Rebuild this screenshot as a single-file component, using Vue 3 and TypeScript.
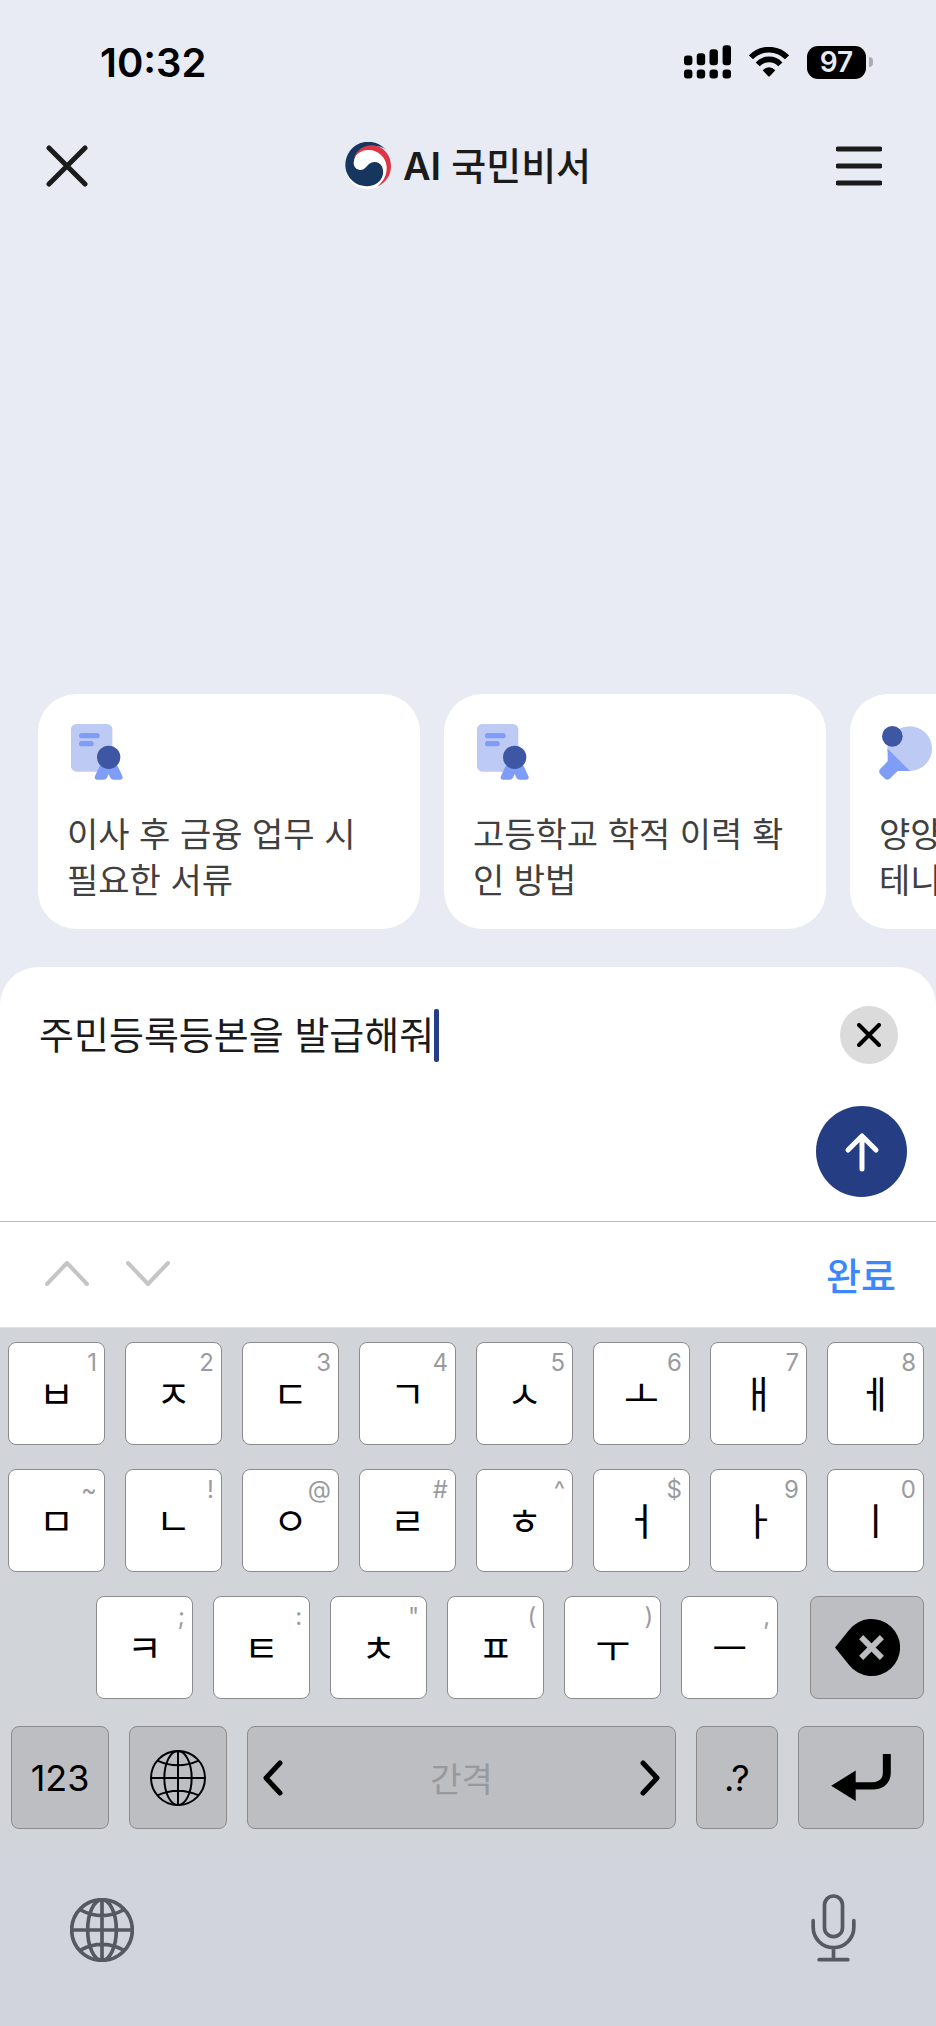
<script setup lang="ts">
import { ref } from 'vue'

interface Suggestion {
  icon: 'certificate' | 'paddle'
  lines: string[]
}

interface Key {
  label: string
  hint: string
}

const suggestions: Suggestion[] = [
  { icon: 'certificate', lines: ['이사 후 금융 업무 시', '필요한 서류'] },
  { icon: 'certificate', lines: ['고등학교 학적 이력 확', '인 방법'] },
  { icon: 'paddle', lines: ['양양', '테니'] },
]

const toKeys = (labels: string, hints: string): Key[] =>
  [...labels].map((label, i) => ({ label, hint: hints[i] }))

const topRow = toKeys('ㅂㅈㄷㄱㅅㅗㅐㅔ', '12345678')
const homeRow = toKeys('ㅁㄴㅇㄹㅎㅓㅏㅣ', '~!@#^$90')
const lowerRow = toKeys('ㅋㅌㅊㅍㅜㅡ', ';:"(),')

const message = ref('주민등록등본을 발급해줘')

const type = (label: string) => {
  message.value += label
}
const erase = () => {
  message.value = message.value.slice(0, -1)
}
const clear = () => {
  message.value = ''
}
</script>

<template>
  <div class="screen">
    <div class="status">
      <time class="clock">10:32</time>
      <div class="indicators">
        <svg class="signal" viewBox="0 0 140 100" aria-hidden="true">
          <rect x="0" y="31" width="25" height="29" rx="9" />
          <rect x="38" y="24" width="25" height="36" rx="9" />
          <rect x="76" y="12" width="25" height="48" rx="9" />
          <rect x="115" y="0" width="25" height="60" rx="9" />
          <rect x="0" y="72" width="25" height="27" rx="9" />
          <rect x="38" y="72" width="25" height="27" rx="9" />
          <rect x="76" y="72" width="25" height="27" rx="9" />
          <rect x="115" y="72" width="25" height="27" rx="9" />
        </svg>
        <svg class="wifi" viewBox="0 0 120 90" aria-hidden="true">
          <path d="M6 31A75 75 0 0 1 114 31M26 52A46 46 0 0 1 94 52" fill="none" stroke="#000" stroke-width="17" />
          <path d="M41 70Q60 52 79 70L63 87Q60 90 57 87Z" />
        </svg>
        <div class="battery">
          <span class="level">97</span>
          <span class="nub"></span>
        </div>
      </div>
    </div>

    <header class="bar">
      <button class="icon-button dismiss" type="button" aria-label="닫기">
        <svg class="close" viewBox="0 0 42 42" aria-hidden="true">
          <path d="M3 3L39 39M39 3L3 39" />
        </svg>
      </button>
      <h1 class="title">
        <svg class="emblem" viewBox="0 0 138 144" aria-hidden="true">
          <circle cx="69" cy="74" r="68" fill="#fff" />
          <path
            fill="#16365f"
            d="M122 22C88 -12 38 -6 14 28C-10 64 0 106 36 126C58 136 84 134 98 122C116 108 118 88 110 72C102 58 84 56 72 66C64 74 58 84 46 84C34 83 26 74 26 62C28 32 56 12 86 12C100 12 112 15 122 22Z"
          />
          <path
            fill="#dc3545"
            d="M26 50C34 22 62 6 92 11C120 17 138 42 138 72C138 100 122 124 96 134C116 118 126 98 125 74C123 44 96 22 68 24C48 25 33 36 26 50Z"
          />
        </svg>
        <span><b>AI</b> 국민비서</span>
      </h1>
      <button class="icon-button more" type="button" aria-label="메뉴">
        <svg class="menu" viewBox="0 0 46 40" aria-hidden="true">
          <path d="M2 3H44M2 20H44M2 37H44" />
        </svg>
      </button>
    </header>

    <main class="content">
      <div class="suggestions">
        <button v-for="(item, i) in suggestions" :key="i" class="card" type="button">
          <svg class="card-icon" viewBox="0 0 180 168" aria-hidden="true">
            <g v-if="item.icon === 'certificate'">
              <rect x="12" y="0" width="124" height="143" rx="16" fill="#bdcaf3" />
              <rect x="36" y="27" width="62" height="16" rx="8" fill="#7f9df7" />
              <rect x="36" y="51" width="44" height="16" rx="8" fill="#7f9df7" />
              <path
                fill="#7f9df7"
                d="M98 126L84 156Q80 166 90 167H110Q117 167 120 161L125 150L130 161Q133 167 140 167H160Q170 166 166 156L152 126Z"
              />
              <circle cx="125" cy="100" r="35" fill="#3e57a4" />
            </g>
            <g v-else>
              <circle cx="92" cy="74" r="67" fill="#bdcaf3" />
              <path
                fill="#7f9df7"
                d="M26 74L93 141H56L34 163Q25 171 16 163L4 151Q-3 142 4 134L26 112Z"
              />
              <circle cx="40" cy="37" r="31" fill="#3e57a4" />
            </g>
          </svg>
          <span class="card-text">
            <span v-for="line in item.lines" :key="line">{{ line }}</span>
          </span>
        </button>
      </div>
    </main>

    <form class="composer" @submit.prevent>
      <div class="entry">
        <label class="field">
          <input v-model="message" class="message" type="text" aria-label="메시지" />
          <span class="caret"></span>
        </label>
        <button class="clear" type="button" aria-label="지우기" @click="clear">
          <svg viewBox="0 0 24 24" aria-hidden="true"><path d="M2 2L22 22M22 2L2 22" /></svg>
        </button>
      </div>
      <button class="send" type="submit" aria-label="보내기">
        <svg viewBox="0 0 36 40" aria-hidden="true"><path d="M18 37V4M4 18L18 4L32 18" /></svg>
      </button>
    </form>

    <div class="assist">
      <button class="icon-button" type="button" aria-label="이전">
        <svg class="step" viewBox="0 0 44 26" aria-hidden="true"><path d="M2 24L22 3L42 24" /></svg>
      </button>
      <button class="icon-button" type="button" aria-label="다음">
        <svg class="step" viewBox="0 0 44 26" aria-hidden="true"><path d="M2 3L22 24L42 3" /></svg>
      </button>
      <button class="done" type="button">완료</button>
    </div>

    <section class="keyboard" aria-label="키보드">
      <div class="row">
        <button v-for="key in topRow" :key="key.label" class="key" type="button" @click="type(key.label)">
          <span class="hint">{{ key.hint }}</span>{{ key.label }}
        </button>
      </div>
      <div class="row">
        <button v-for="key in homeRow" :key="key.label" class="key" type="button" @click="type(key.label)">
          <span class="hint">{{ key.hint }}</span>{{ key.label }}
        </button>
      </div>
      <div class="row lower">
        <button v-for="key in lowerRow" :key="key.label" class="key" type="button" @click="type(key.label)">
          <span class="hint">{{ key.hint }}</span>{{ key.label }}
        </button>
        <button class="key dark erase" type="button" aria-label="삭제" @click="erase">
          <svg class="erase-icon" viewBox="0 0 194 170" aria-hidden="true">
            <path d="M0 85L42 33A85 85 0 1 1 42 137Z" />
            <path d="M78 54L140 116M140 54L78 116" stroke="#bdbec2" stroke-width="17" />
          </svg>
        </button>
      </div>
      <div class="row bottom">
        <button class="key dark" type="button">123</button>
        <button class="key dark" type="button" aria-label="언어 전환">
          <svg class="globe-key" viewBox="0 0 168 168" aria-hidden="true">
            <circle cx="84" cy="84" r="81" />
            <ellipse cx="84" cy="84" rx="41" ry="81" />
            <path d="M84 3V165M3 84H165M22 32Q84 60 146 32M22 136Q84 108 146 136" />
          </svg>
        </button>
        <button class="key dark space" type="button" @click="type(' ')">
          <svg class="arrow" viewBox="0 0 20 36" aria-hidden="true"><path d="M17 3L3 18L17 33" /></svg>
          <span>간격</span>
          <svg class="arrow" viewBox="0 0 20 36" aria-hidden="true"><path d="M3 3L17 18L3 33" /></svg>
        </button>
        <button class="key dark punctuation" type="button">.?</button>
        <button class="key dark enter" type="button" aria-label="줄바꿈" @click="type('\n')">
          <svg class="enter-icon" viewBox="0 0 180 142" aria-hidden="true">
            <path d="M0 96L74 50V142Z" />
            <path d="M156 0H180V56C180 88 158 107 126 107H70V85H124C144 85 156 76 156 56Z" />
          </svg>
        </button>
      </div>
    </section>

    <footer class="dock">
      <button class="icon-button" type="button" aria-label="키보드 전환">
        <svg class="globe-dock" viewBox="0 0 192 192" aria-hidden="true">
          <circle cx="96" cy="96" r="91" />
          <ellipse cx="96" cy="96" rx="43" ry="91" />
          <path d="M96 5V187M5 96H187M32 36Q96 70 160 36M32 156Q96 122 160 156" />
        </svg>
      </button>
      <button class="icon-button" type="button" aria-label="받아쓰기">
        <svg class="mic" viewBox="0 0 134 204" aria-hidden="true">
          <rect x="40" y="6" width="54" height="122" rx="27" />
          <path d="M6 80V100A61 61 0 0 0 128 100V80M67 161V197M24 197H110" />
        </svg>
      </button>
    </footer>
  </div>
</template>

<style>
body {
  margin: 0;
  background: #e8ebf4;
}
</style>

<style scoped>
.screen {
  display: flex;
  flex-direction: column;
  min-height: 100vh;
  background: #e8ebf4;
  color: #1b1b1b;
  font-family: Inter, 'Noto Sans CJK KR', sans-serif;
}

button {
  margin: 0;
  padding: 0;
  border: 0;
  background: none;
  color: inherit;
  font: inherit;
  cursor: pointer;
}

svg {
  display: block;
}

.icon-button {
  display: flex;
}

/* Status bar */
.status {
  display: flex;
  align-items: center;
  justify-content: space-between;
  height: 124px;
  padding: 0 63px 0 100px;
  color: #000;
}

.clock {
  font-size: 40px;
  font-weight: 600;
}

.indicators {
  display: flex;
  align-items: center;
  gap: 18px;
}

.signal {
  width: 47px;
  height: 34px;
}

.wifi {
  width: 40px;
  height: 30px;
}

.battery {
  display: flex;
  align-items: center;
  gap: 3px;
}

.level {
  width: 59px;
  border-radius: 11px;
  background: #000;
  color: #e8ebf4;
  font-size: 28px;
  font-weight: 600;
  line-height: 33px;
  text-align: center;
}

.nub {
  width: 4px;
  height: 10px;
  border-radius: 0 4px 4px 0;
  background: #a9abb3;
}

/* Title bar */
.bar {
  display: grid;
  grid-template-columns: 1fr auto 1fr;
  align-items: center;
  height: 84px;
}

.dismiss {
  justify-self: start;
  margin-left: 46px;
}

.more {
  justify-self: end;
  margin-right: 54px;
}

.close {
  width: 42px;
  height: 42px;
}

.menu {
  width: 46px;
  height: 40px;
}

.close,
.menu {
  fill: none;
  stroke: #1b1b1b;
  stroke-width: 5;
  stroke-linecap: round;
}

.title {
  display: flex;
  align-items: center;
  gap: 12px;
  margin: 0;
  font-size: 38px;
  font-weight: 500;
  line-height: 46px;
}

.title b {
  font-weight: 600;
}

.emblem {
  width: 46px;
  height: 48px;
}

/* Suggestions */
.content {
  display: flex;
  flex: 1;
  flex-direction: column;
  justify-content: flex-end;
  padding: 0 0 38px 38px;
}

.suggestions {
  display: flex;
  gap: 24px;
  overflow-x: auto;
  scrollbar-width: none;
}

.card {
  display: flex;
  flex: 0 0 382px;
  flex-direction: column;
  gap: 32px;
  box-sizing: border-box;
  padding: 30px 29px 25px;
  border-radius: 38px;
  background: #fff;
  color: #404040;
  font-size: 34px;
  line-height: 46px;
  text-align: left;
}

.card-icon {
  width: 60px;
  height: 56px;
}

.card-text {
  display: flex;
  flex-direction: column;
  white-space: nowrap;
}

/* Composer */
.composer {
  display: flex;
  flex-direction: column;
  gap: 42px;
  padding: 39px 29px 24px 39px;
  border-bottom: 1px solid #b9b9bb;
  border-radius: 38px 38px 0 0;
  background: #fff;
}

.entry {
  display: flex;
  align-items: center;
  justify-content: space-between;
  padding-right: 9px;
}

.field {
  display: flex;
  align-items: center;
}

.message {
  field-sizing: content;
  padding: 0;
  border: 0;
  outline: 0;
  background: none;
  color: #1b1b1b;
  caret-color: transparent;
  font: inherit;
  font-size: 38px;
  line-height: 52px;
}

.caret {
  width: 5px;
  height: 53px;
  border-radius: 2px;
  background: #253e83;
}

.clear,
.send {
  display: flex;
  align-items: center;
  justify-content: center;
  border-radius: 50%;
}

.clear {
  width: 58px;
  height: 58px;
  background: #dbdbdb;
}

.clear svg {
  width: 24px;
  height: 24px;
  fill: none;
  stroke: #000;
  stroke-width: 4;
  stroke-linecap: round;
}

.send {
  align-self: flex-end;
  width: 91px;
  height: 91px;
  background: #253e83;
}

.send svg {
  width: 36px;
  height: 40px;
  fill: none;
  stroke: #fff;
  stroke-width: 5;
  stroke-linecap: round;
  stroke-linejoin: round;
}

/* Input assistant */
.assist {
  display: flex;
  align-items: center;
  gap: 37px;
  box-sizing: border-box;
  height: 105px;
  padding: 0 40px 3px 45px;
  background: #fff;
}

.step {
  width: 44px;
  height: 26px;
  fill: none;
  stroke: #c5c5c7;
  stroke-width: 4;
  stroke-linecap: round;
  stroke-linejoin: round;
}

.done {
  margin-left: auto;
  color: #3a88fb;
  font-size: 38px;
  font-weight: 500;
}

/* Keyboard */
.keyboard {
  display: flex;
  flex-direction: column;
  gap: 24px;
  padding: 14px 12px 18px 8px;
  border-top: 1px solid #e1e2e6;
  background: #d1d5da;
}

.row {
  display: flex;
  gap: 20px;
}

.lower {
  padding-left: 88px;
}

.bottom {
  padding: 3px 0 0 3px;
}

.key {
  position: relative;
  display: flex;
  flex: 97 1 0;
  align-items: center;
  justify-content: center;
  box-sizing: border-box;
  height: 103px;
  padding-bottom: 4px;
  border: 1px solid #8b8b8d;
  border-radius: 8px;
  background: #fff;
  color: #000;
  font-size: 38px;
  font-weight: 400;
}

.hint {
  position: absolute;
  top: 6px;
  right: 7px;
  color: #9b9b9f;
  font-size: 24px;
  line-height: 28px;
}

.dark {
  padding-bottom: 0;
  background: #bdbec2;
  font-size: 36px;
}

.erase {
  flex-grow: 114;
  margin-left: 12px;
}

.erase-icon {
  width: 65px;
  height: 57px;
}

.space {
  flex-grow: 430;
  justify-content: space-between;
  color: #98999d;
  font-size: 34px;
}

.punctuation {
  flex-grow: 81;
}

.enter {
  flex-grow: 125;
}

.arrow {
  width: 20px;
  height: 36px;
  margin: 0 15px;
  fill: none;
  stroke: #000;
  stroke-width: 5;
  stroke-linecap: round;
  stroke-linejoin: round;
}

.globe-key {
  width: 56px;
  height: 56px;
  fill: none;
  stroke: #000;
  stroke-width: 6;
}

.enter-icon {
  width: 60px;
  height: 47px;
}

/* Dock */
.dock {
  display: flex;
  align-items: flex-end;
  justify-content: space-between;
  box-sizing: border-box;
  height: 179px;
  padding: 0 80px 64px 70px;
  background: #d1d4dd;
}

.globe-dock,
.mic {
  fill: none;
  stroke: #555961;
  stroke-width: 11;
  stroke-linecap: round;
}

.globe-dock {
  width: 64px;
  height: 64px;
}

.mic {
  width: 45px;
  height: 68px;
}
</style>
